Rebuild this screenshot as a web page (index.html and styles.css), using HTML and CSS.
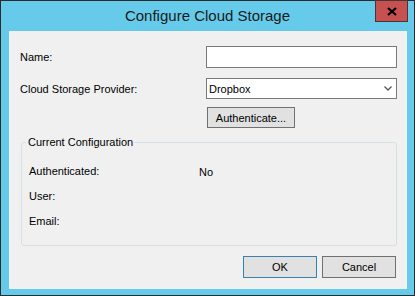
FILE: index.html
```html
<!DOCTYPE html>
<html>
<head>
<meta charset="utf-8">
<link rel="stylesheet" href="styles.css">
</head>
<body>
<div class="window">
  <div class="titlebar">
    <span class="spacer"></span>
    <div class="title">Configure Cloud Storage</div>
    <button class="close" aria-label="Close">
      <svg width="10" height="9" viewBox="0 0 10 9"><path d="M1 1 L9 8 M9 1 L1 8" stroke="#000" stroke-width="2.2" fill="none"/></svg>
    </button>
  </div>
  <div class="client">
    <div class="form">
      <div class="row r1">
        <span class="label">Name:</span>
        <div class="textbox"></div>
      </div>
      <div class="row r2">
        <span class="label">Cloud Storage Provider:</span>
        <div class="select">
          <span class="select-text">Dropbox</span>
          <svg class="chev" width="8" height="5" viewBox="0 0 8 5"><path d="M0.5 0.5 L4 4 L7.5 0.5" stroke="#555" stroke-width="1.3" fill="none"/></svg>
        </div>
      </div>
      <div class="row r3">
        <button class="btn auth">Authenticate...</button>
      </div>
    </div>
    <fieldset class="group">
      <legend>Current Configuration</legend>
      <div class="info">
        <span class="label">Authenticated:</span><span class="value">No</span>
        <span class="label">User:</span><span class="value"></span>
        <span class="label">Email:</span><span class="value"></span>
      </div>
    </fieldset>
    <div class="actions">
      <button class="btn ok">OK</button>
      <button class="btn cancel">Cancel</button>
    </div>
  </div>
</div>
</body>
</html>
```

FILE: styles.css
```css
* { box-sizing: border-box; }
html, body { margin: 0; padding: 0; }
body {
  width: 415px;
  height: 296px;
  font-family: "Liberation Sans", Arial, sans-serif;
  font-size: 11px;
  color: #000;
  background: #66cbea;
}
.window {
  width: 415px;
  height: 296px;
  border: 1px solid #2b2b2b;
  background: #66cbea;
  display: flex;
  flex-direction: column;
}
.titlebar {
  height: 30px;
  display: grid;
  grid-template-columns: 1fr auto 1fr;
  align-items: start;
}
.title {
  padding-top: 6px;
  font-size: 15px;
  line-height: 17px;
  color: #1a1a1a;
  white-space: nowrap;
}
.close {
  justify-self: end;
  margin: -1px 6px 0 0;
  width: 33px;
  height: 22px;
  padding: 0;
  border: 1px solid #4a3535;
  background: #c75050;
  display: flex;
  align-items: center;
  justify-content: center;
}
.close svg { display: block; margin-top: 1px; }
.client {
  flex: 1;
  margin: 0 7px 6px 8px;
  background: #f0f0f0;
  display: flex;
  flex-direction: column;
}
.form {
  padding: 15px 0 0 11px;
}
.row {
  display: grid;
  grid-template-columns: 186px 191px;
  align-items: center;
}
.r1 { height: 22px; }
.r2 { height: 21px; margin-top: 10px; }
.r3 { height: 21px; margin-top: 8px; }
.label { line-height: 13px; padding-top: 1px; }
.textbox {
  height: 22px;
  border: 1px solid #7a7a7a;
  background: #fff;
}
.select {
  height: 21px;
  border: 1px solid #7a7a7a;
  background: #fff;
  display: flex;
  align-items: center;
  justify-content: space-between;
  padding: 0 4px 0 2px;
}
.chev { display: block; }
.btn {
  font-family: inherit;
  font-size: 11px;
  color: #000;
  background: #e1e1e1;
  border: 1px solid #707070;
  padding: 0;
  height: 22px;
  width: 74px;
}
.auth {
  grid-column: 2;
  margin-left: 1px;
  width: 88px;
  height: 21px;
}
.group {
  margin: 7px 10px 0 12px;
  padding: 0;
  height: 111px;
  border: 1px solid #d5dfe5;
  border-radius: 3px;
  min-width: 0;
}
.group legend {
  margin-left: 4px;
  padding: 0 2px;
  line-height: 14px;
}
.info {
  display: grid;
  grid-template-columns: 170px auto;
  grid-auto-rows: 25px;
  align-items: center;
  padding: 9px 0 0 7px;
}
.info .value { padding-top: 3px; line-height: 13px; }
.actions {
  display: flex;
  justify-content: flex-end;
  gap: 5px;
  margin-top: 10px;
  padding-right: 11px;
}
.ok { border-color: #3c7fb1; }
```
